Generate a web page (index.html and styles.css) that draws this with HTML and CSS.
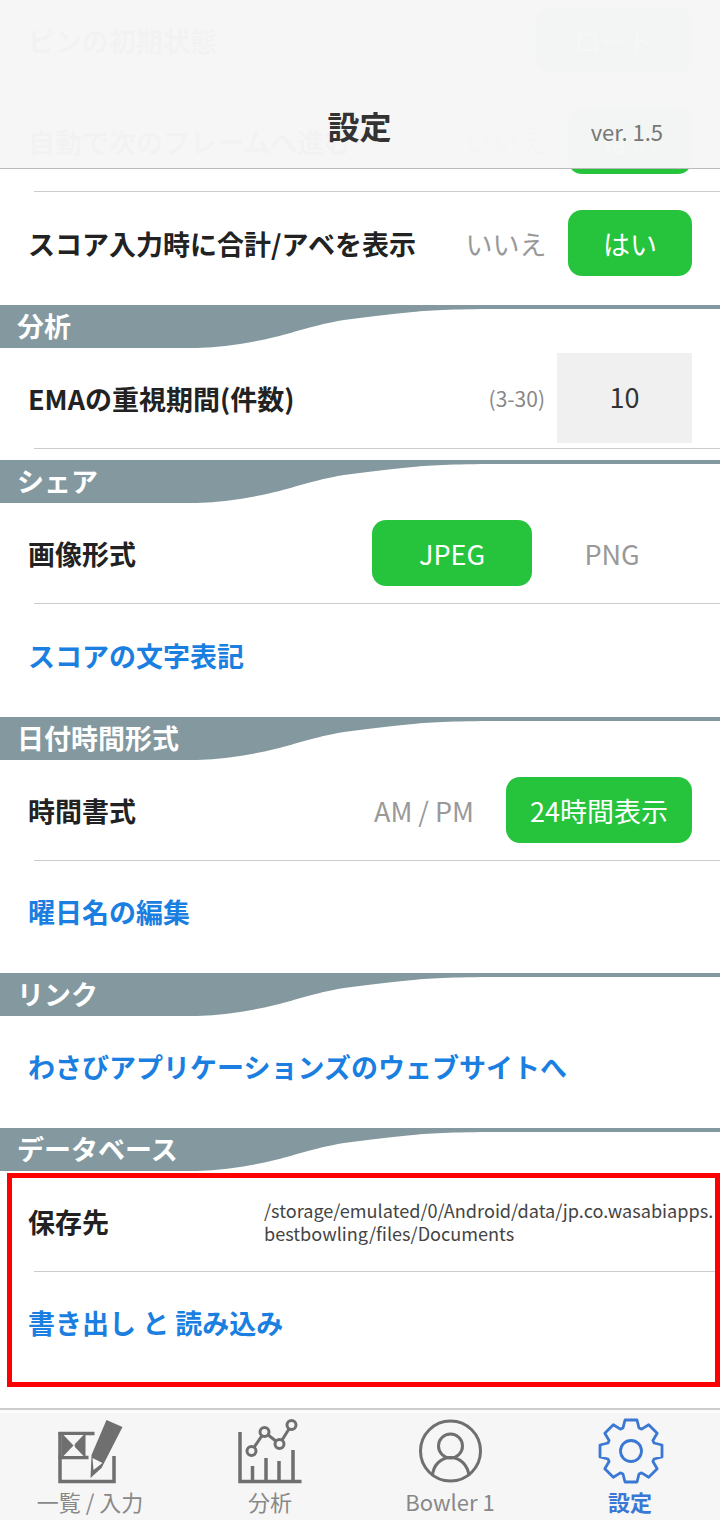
FILE: index.html
```html
<!DOCTYPE html>
<html lang="ja">
  <head>
    <meta charset="UTF-8" />
    <meta name="viewport" content="width=device-width, initial-scale=1.0" />
    <title>設定</title>
    <link rel="stylesheet" href="styles.css">
  </head>

  <body>
    <header class="top-bar">
      <span></span>
      <h1>設定</h1>
      <span class="version">ver. 1.5</span>
    </header>

    <main class="scroller">
      <div class="list">
        <div class="row">
          <span class="label">ピンの初期状態</span>
          <span class="option on w156">ロード</span>
        </div>
        <hr class="rule" />
        <div class="row">
          <span class="label">自動で次のフレームへ進む</span>
          <span class="option w124">いいえ</span>
          <span class="option on w124">はい</span>
        </div>
        <hr class="rule" />
        <div class="row tall">
          <span class="label">スコア入力時に合計/アベを表示</span>
          <span class="option w124">いいえ</span>
          <span class="option on w124">はい</span>
        </div>

        <section class="group">
          <div class="group-title">
            <svg class="wave" viewBox="0 0 720 43" preserveAspectRatio="none"><path d="M0 0H720V4H505C460 4 430 5 413 7C385 10 365 12 344 15C310 21 300 26 275 32C250 38 225 42 197 43H0Z" /></svg>
            <h2>分析</h2>
          </div>
          <div class="row">
            <span class="label">EMAの重視期間(件数)</span>
            <span class="hint">(3-30)</span>
            <span class="number">10</span>
          </div>
          <hr class="rule" />
        </section>

        <section class="group">
          <div class="group-title">
            <svg class="wave" viewBox="0 0 720 43" preserveAspectRatio="none"><path d="M0 0H720V4H505C460 4 430 5 413 7C385 10 365 12 344 15C310 21 300 26 275 32C250 38 225 42 197 43H0Z" /></svg>
            <h2>シェア</h2>
          </div>
          <div class="row">
            <span class="label">画像形式</span>
            <span class="option on w160">JPEG</span>
            <span class="option w160">PNG</span>
          </div>
          <hr class="rule" />
          <div class="row tall"><a class="link">スコアの文字表記</a></div>
        </section>

        <section class="group">
          <div class="group-title">
            <svg class="wave" viewBox="0 0 720 43" preserveAspectRatio="none"><path d="M0 0H720V4H505C460 4 430 5 413 7C385 10 365 12 344 15C310 21 300 26 275 32C250 38 225 42 197 43H0Z" /></svg>
            <h2>日付時間形式</h2>
          </div>
          <div class="row">
            <span class="label">時間書式</span>
            <span class="option w164">AM / PM</span>
            <span class="option on w186">24時間表示</span>
          </div>
          <hr class="rule" />
          <div class="row link-row"><a class="link">曜日名の編集</a></div>
        </section>

        <section class="group">
          <div class="group-title">
            <svg class="wave" viewBox="0 0 720 43" preserveAspectRatio="none"><path d="M0 0H720V4H505C460 4 430 5 413 7C385 10 365 12 344 15C310 21 300 26 275 32C250 38 225 42 197 43H0Z" /></svg>
            <h2>リンク</h2>
          </div>
          <div class="row link-row"><a class="link">わさびアプリケーションズのウェブサイトへ</a></div>
        </section>

        <section class="group">
          <div class="group-title">
            <svg class="wave" viewBox="0 0 720 43" preserveAspectRatio="none"><path d="M0 0H720V4H505C460 4 430 5 413 7C385 10 365 12 344 15C310 21 300 26 275 32C250 38 225 42 197 43H0Z" /></svg>
            <h2>データベース</h2>
          </div>
          <div class="row">
            <span class="label save-label">保存先</span>
            <span class="path">/storage/emulated/0/Android/data/jp.co.wasabiapps.<br />bestbowling/files/Documents</span>
          </div>
          <hr class="rule" />
          <div class="row link-row"><a class="link">書き出し と 読み込み</a></div>
        </section>
      </div>
    </main>

    <div class="highlight"></div>

    <nav class="tabs">
      <div class="tab">
        <svg class="tab-icon" viewBox="2.5 0 75 72">
          <path class="stroke" d="M9.5 17V66.5H63.5V41" />
          <path class="stroke" d="M8 18.5H44M8 42.5H38" />
          <path class="fill" d="M11 20H21.5L23 30L21.5 41H11L11 20ZM24 30L26 20H35V41H26Z" />
          <path class="white" d="M13 20H33L23 30.5ZM13 41L23 30.5L33 41Z" />
          <path class="fill" d="M56 5L72 12L51 53L40 63L41 40Z" />
          <path class="white" d="M42 43L52 48L43 55Z" />
        </svg>
        <span class="tab-label">一覧 / 入力</span>
      </div>
      <div class="tab">
        <svg class="tab-icon" viewBox="2.5 0 75 72">
          <path class="stroke" d="M9.5 17V66.5H71" />
          <path class="stroke" d="M22 51V65M35.5 43V65M48.5 46V65M62.5 35V65" />
          <path class="line" d="M21 36L34 17L49 29L61 10" />
          <circle class="dot" cx="21" cy="36" r="4.5" />
          <circle class="dot" cx="34" cy="17" r="4.5" />
          <circle class="dot" cx="49" cy="29" r="4.5" />
          <circle class="dot" cx="61" cy="10" r="4.5" />
        </svg>
        <span class="tab-label">分析</span>
      </div>
      <div class="tab">
        <svg class="tab-icon" viewBox="0 0 75 72">
          <circle class="line" cx="37.5" cy="36" r="30" />
          <circle class="line" cx="37.5" cy="31" r="12" />
          <path class="line" d="M19.5 61C20 50 28 42.5 37.5 42.5C47 42.5 55 50 56 61" />
        </svg>
        <span class="tab-label">Bowler 1</span>
      </div>
      <div class="tab active">
        <svg class="tab-icon" viewBox="-2.5 0 75 72">
          <g transform="translate(35.5 36)">
            <polygon class="gear" points="-8,-23 -6,-31 6,-31 8,-23 10.6,-21.9 17.7,-26.2 26.2,-17.7 21.9,-10.6 23,-8 31,-6 31,6 23,8 21.9,10.6 26.2,17.7 17.7,26.2 10.6,21.9 8,23 6,31 -6,31 -8,23 -10.6,21.9 -17.7,26.2 -26.2,17.7 -21.9,10.6 -23,8 -31,6 -31,-6 -23,-8 -21.9,-10.6 -26.2,-17.7 -17.7,-26.2 -10.6,-21.9" />
            <circle class="gear" r="10.5" />
          </g>
        </svg>
        <span class="tab-label">設定</span>
      </div>
    </nav>
  </body>
</html>
```

FILE: styles.css
```css
* {
  box-sizing: border-box;
}

body {
  font-family: "Noto Sans CJK JP", "Noto Sans", sans-serif;
  background-color: white;
  margin: 0;
  height: 1520px;
  overflow: hidden;
  display: flex;
  flex-direction: column;
  color: #222;
}

.top-bar {
  position: absolute;
  top: 0;
  left: 0;
  width: 720px;
  height: 169px;
  z-index: 2;
  display: grid;
  grid-template-columns: 1fr auto 1fr;
  align-items: end;
  padding: 0 57px 21px 0;
  background-color: rgba(246, 246, 246, 0.985);
  border-bottom: 1px solid #bbb;
}

.top-bar h1 {
  margin: 0 0 -1px 0;
  font-size: 32px;
  line-height: 46px;
  font-weight: 700;
  color: #333;
  transform: translateX(28px);
}

.version {
  justify-self: end;
  font-size: 22px;
  line-height: 32px;
  color: #777;
}

.scroller {
  flex: 1;
  overflow: hidden;
}

.list {
  margin-top: -10px;
}

.row {
  height: 100px;
  display: flex;
  align-items: center;
  padding: 0 28px;
}

.row.tall {
  height: 102px;
}

.row.link-row {
  height: 101px;
}

.rule {
  margin: 0 0 0 34px;
  border: none;
  border-top: 1px solid #ccc;
}

.label {
  margin-right: auto;
  font-size: 27px;
  font-weight: 700;
  white-space: nowrap;
}

.option {
  height: 66px;
  display: flex;
  align-items: center;
  justify-content: center;
  font-size: 27px;
  color: #999;
  border-radius: 14px;
  flex: none;
}

.option.on {
  background-color: #26c43d;
  color: white;
}

.w124 {
  width: 124px;
}

.w156 {
  width: 156px;
}

.w160 {
  width: 160px;
}

.w164 {
  width: 164px;
}

.w186 {
  width: 186px;
}

.hint {
  margin-right: 12px;
  font-size: 21px;
  color: #888;
}

.number {
  width: 135px;
  height: 90px;
  display: flex;
  align-items: center;
  justify-content: center;
  padding-bottom: 3px;
  background-color: #f0f0f0;
  font-size: 27px;
  color: #333;
}

.link {
  font-size: 27px;
  font-weight: 700;
  color: #1a7fe0;
}

.group {
  margin-top: 11px;
}

.group-title {
  position: relative;
  height: 43px;
  display: flex;
  align-items: flex-end;
}

.wave {
  position: absolute;
  top: 0;
  left: 0;
  width: 100%;
  height: 100%;
  fill: #84999f;
}

.group-title h2 {
  position: relative;
  margin: 0 0 2px 17px;
  font-size: 27px;
  line-height: 40px;
  font-weight: 700;
  color: white;
}

.save-label {
  flex: none;
  width: 236px;
  margin-right: 0;
}

.path {
  margin-top: 2px;
  font-size: 18.1px;
  line-height: 23px;
  color: #444;
  white-space: nowrap;
}

.highlight {
  position: absolute;
  top: 1173px;
  left: 7px;
  width: 713px;
  height: 214px;
  border: 5px solid #f00;
}

.tabs {
  flex: none;
  height: 112px;
  display: grid;
  grid-template-columns: repeat(4, 180px);
  background-color: #f6f6f6;
  border-top: 2px solid #ccc;
  box-shadow: inset 0 3px 0 #fbfbfb;
  padding-top: 5px;
}

.tab {
  display: flex;
  flex-direction: column;
  align-items: center;
}

.tab-icon {
  width: 75px;
  height: 72px;
}

.tab-label {
  margin-top: -2px;
  font-size: 22px;
  line-height: 32px;
  color: #888;
}

.tab.active .tab-label {
  font-weight: 700;
  color: #3a78d4;
}

.stroke {
  fill: none;
  stroke: #6f6f6f;
  stroke-width: 3.5;
}

.fill {
  fill: #6f6f6f;
}

.white {
  fill: #f6f6f6;
}

.line {
  fill: none;
  stroke: #6f6f6f;
  stroke-width: 3;
}

.dot {
  fill: #f6f6f6;
  stroke: #6f6f6f;
  stroke-width: 3;
}

.gear {
  fill: none;
  stroke: #3a78d4;
  stroke-width: 2.8;
  stroke-linejoin: round;
}
```
